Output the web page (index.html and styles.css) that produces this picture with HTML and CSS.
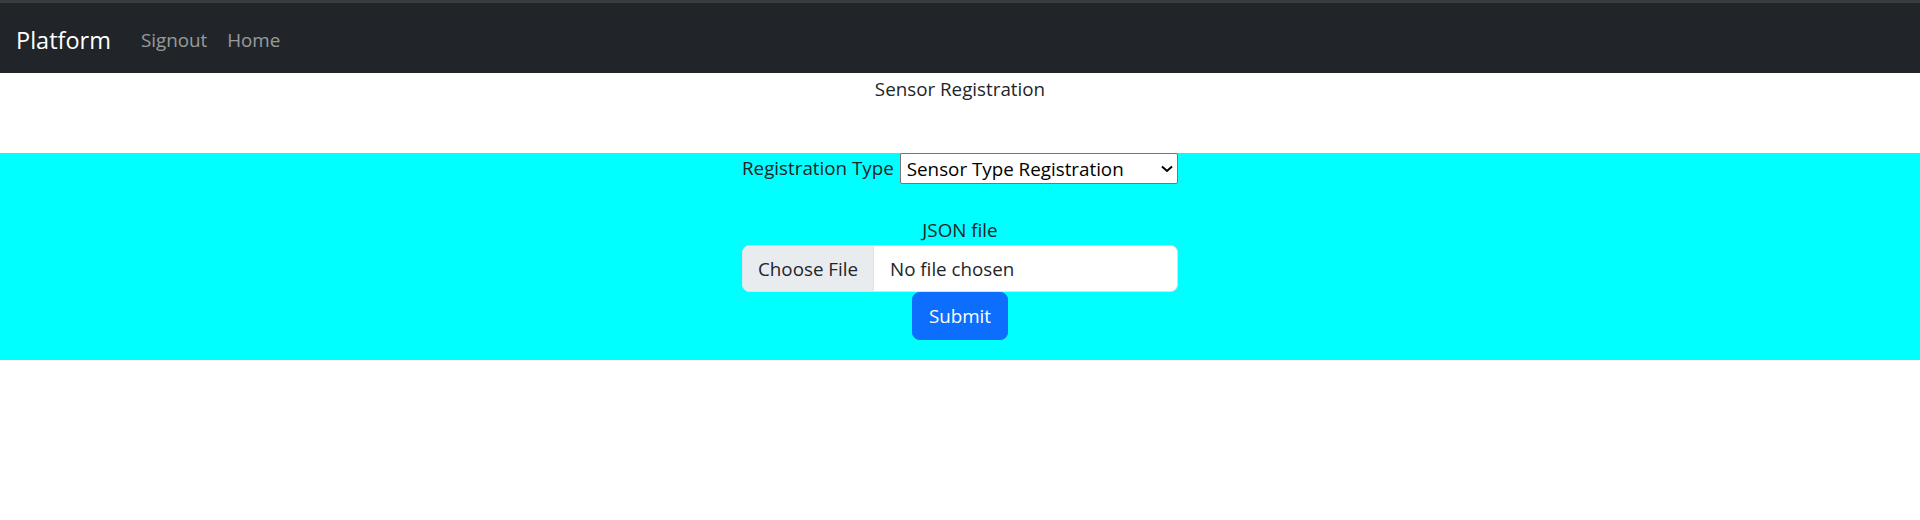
FILE: index.html
```html
<!DOCTYPE html>
<html lang="en">
<head>
<meta charset="utf-8">
<title>Sensor Registration</title>
<link rel="stylesheet" href="styles.css">
</head>
<body>
<nav class="navbar">
  <a class="brand" href="#">Platform</a>
  <a class="nav-link" href="#">Signout</a>
  <a class="nav-link" href="#">Home</a>
</nav>
<p class="title">Sensor Registration</p>
<section class="panel">
  <form class="reg-form">
    <div class="type-row">
      <label class="type-label" for="regtype">Registration Type</label>
      <div class="select-wrap">
        <select id="regtype" class="type-select">
          <option>Sensor Type Registration</option>
        </select>
        <svg class="chevron" width="12" height="8" viewBox="0 0 12 8"><polyline points="1,1.5 6,6 11,1.5" fill="none" stroke="#000" stroke-width="2"/></svg>
      </div>
    </div>
    <div class="file-label">JSON file</div>
    <div class="file-input">
      <span class="file-btn">Choose File</span>
      <span class="file-name">No file chosen</span>
    </div>
    <button type="button" class="submit-btn">Submit</button>
  </form>
</section>
</body>
</html>
```
FILE: styles.css
```css
* { box-sizing: border-box; }
html, body { margin: 0; padding: 0; }
body {
  font-family: "Open Sans", "Noto Sans", sans-serif;
  font-size: 18.8px;
  line-height: 30px;
  color: #212529;
  background: #fff;
}
.navbar {
  height: 73px;
  border-top: 3px solid #3a3c40;
  background: #212529;
  display: flex;
  align-items: center;
  padding: 3px 15px 0;
}
.brand {
  font-size: 23.5px;
  color: #fff;
  text-decoration: none;
  margin-right: 20px;
  padding-left: 1px;
}
.nav-link {
  font-size: 18.8px;
  color: rgba(255,255,255,.55);
  text-decoration: none;
  padding: 0 10px;
}
.title {
  margin: 0 0 49px;
  padding-top: 1px;
  text-align: center;
  line-height: 30px;
}
.panel {
  background: #00ffff;
  padding-bottom: 20px;
}
.reg-form {
  width: 436px;
  margin: 0 auto;
}
.type-row {
  display: flex;
  align-items: center;
  height: 31px;
}
.type-label {
  line-height: 31px;
  margin-right: 6px;
}
.select-wrap {
  position: relative;
  flex: 1;
}
.type-select {
  appearance: none;
  -webkit-appearance: none;
  width: 100%;
  height: 31px;
  border: 1px solid #767676;
  border-radius: 2px;
  background: #fff;
  color: #000;
  font-family: inherit;
  font-size: 18.8px;
  padding: 0 0 0 6px;
  margin: 0;
}
.chevron {
  position: absolute;
  right: 5px;
  top: 12px;
  pointer-events: none;
}
.file-label {
  margin-top: 31px;
  text-align: center;
  line-height: 30px;
}
.file-input {
  display: flex;
  height: 47px;
  border: 1px solid #dee2e6;
  border-radius: 7.5px;
  background: #fff;
  overflow: hidden;
}
.file-btn {
  display: flex;
  align-items: center;
  width: 131px;
  padding-left: 15px;
  background: #e9ecef;
  border-right: 1px solid #dee2e6;
  color: #212529;
}
.file-name {
  display: flex;
  align-items: center;
  padding-left: 16px;
  color: #212529;
}
.submit-btn {
  display: block;
  margin: 0 auto;
  width: 96px;
  height: 48px;
  border: 1px solid #0d6efd;
  border-radius: 7.5px;
  background: #0d6efd;
  color: #fff;
  font-family: inherit;
  font-size: 18.8px;
  line-height: 30px;
  padding: 0;
}
```
